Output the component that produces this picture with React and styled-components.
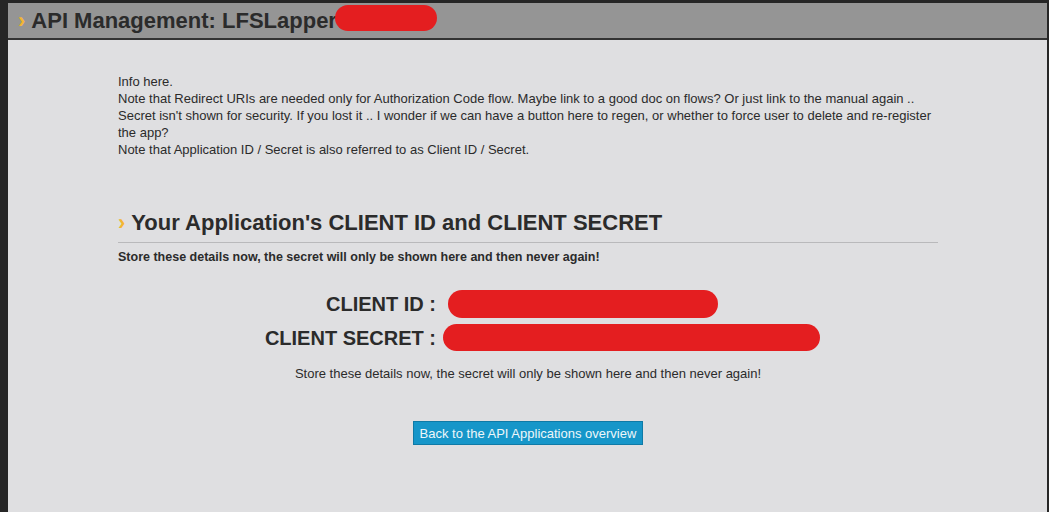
import React from "react";
import styled, { createGlobalStyle } from "styled-components";

const GlobalStyle = createGlobalStyle`
  html, body {
    margin: 0;
    padding: 0;
    background: #262626;
    font-family: Arial, "Liberation Sans", sans-serif;
  }
`;

const Page = styled.div`
  width: 1049px;
  height: 512px;
  padding: 3px 2px 0 8px;
  box-sizing: border-box;
  background: #262626;
  overflow: hidden;
`;

const Panel = styled.div`
  height: 100%;
  background: #dfdfe1;
`;

const Header = styled.div`
  position: relative;
  height: 35px;
  background: #959595;
  border-bottom: 2px solid #333;
  display: flex;
  align-items: center;
  padding-left: 10px;
`;

const Chevron = styled.span`
  color: #f2b632;
  font-weight: bold;
  margin-right: 6px;
`;

const Title = styled.h1`
  margin: 0;
  font-size: 22px;
  font-weight: bold;
  color: #2b2b2b;
  display: flex;
  align-items: center;
`;

const Content = styled.div`
  width: 820px;
  margin-left: 110px;
  padding-top: 33px;
`;

const Info = styled.p`
  margin: 0;
  font-size: 13px;
  line-height: 17px;
  color: #2b2b2b;
`;

const Heading = styled.h2`
  margin: 52px 0 0;
  padding-bottom: 6px;
  font-size: 22px;
  font-weight: bold;
  color: #2b2b2b;
  border-bottom: 1px solid #b9b9bb;
  display: flex;
  align-items: center;
`;

const Warning = styled.p`
  margin: 7px 0 0;
  font-size: 12.5px;
  font-weight: bold;
  color: #2b2b2b;
`;

const Creds = styled.div`
  margin-top: 26px;
  display: grid;
  grid-template-columns: 318px 1fr;
  row-gap: 6px;
  align-items: center;
`;

const Label = styled.div`
  text-align: right;
  font-size: 20px;
  font-weight: bold;
  color: #2b2b2b;
  line-height: 28px;
`;

const Value = styled.div`
  height: 28px;
  padding-left: ${({ offset }) => offset}px;
`;

const Note = styled.p`
  margin: 14px 0 0;
  text-align: center;
  font-size: 13px;
  color: #2b2b2b;
`;

const ButtonRow = styled.div`
  margin-top: 40px;
  display: flex;
  justify-content: center;
`;

const Button = styled.button`
  background: #1696c9;
  border: 1px solid #0f7aa6;
  color: #eef6fa;
  font-family: Arial, "Liberation Sans", sans-serif;
  font-size: 13px;
  line-height: 15px;
  padding: 4px 6px 3px;
  cursor: pointer;
`;

const Scribble = ({ width, height }) => (
  <svg width={width} height={height} viewBox={`0 0 ${width} ${height}`}>
    <line
      x1={height / 2}
      y1={height / 2}
      x2={width - height / 2}
      y2={height / 2}
      stroke="#e41e20"
      strokeWidth={height}
      strokeLinecap="round"
    />
  </svg>
);

const Redact = styled.span`
  position: absolute;
  left: ${({ left }) => left}px;
  top: ${({ top }) => top}px;
  line-height: 0;
`;

export default function App() {
  return (
    <>
      <GlobalStyle />
      <Page>
        <Panel>
          <Header>
            <Title>
              <Chevron>›</Chevron>
              API Management: LFSLapper
            </Title>
            <Redact left={327} top={2}>
              <Scribble width={102} height={26} />
            </Redact>
          </Header>
          <Content>
            <Info>
              Info here.
              <br />
              Note that Redirect URIs are needed only for Authorization Code flow. Maybe link to a good doc on flows? Or just link to the manual again ..
              <br />
              Secret isn't shown for security. If you lost it .. I wonder if we can have a button here to regen, or whether to force user to delete and re-register the app?
              <br />
              Note that Application ID / Secret is also referred to as Client ID / Secret.
            </Info>
            <Heading>
              <Chevron>›</Chevron>
              Your Application's CLIENT ID and CLIENT SECRET
            </Heading>
            <Warning>
              Store these details now, the secret will only be shown here and then never again!
            </Warning>
            <Creds>
              <Label>CLIENT ID :</Label>
              <Value offset={12}>
                <Scribble width={270} height={28} />
              </Value>
              <Label>CLIENT SECRET :</Label>
              <Value offset={7}>
                <Scribble width={377} height={27} />
              </Value>
            </Creds>
            <Note>
              Store these details now, the secret will only be shown here and then never again!
            </Note>
            <ButtonRow>
              <Button>Back to the API Applications overview</Button>
            </ButtonRow>
          </Content>
        </Panel>
      </Page>
    </>
  );
}
